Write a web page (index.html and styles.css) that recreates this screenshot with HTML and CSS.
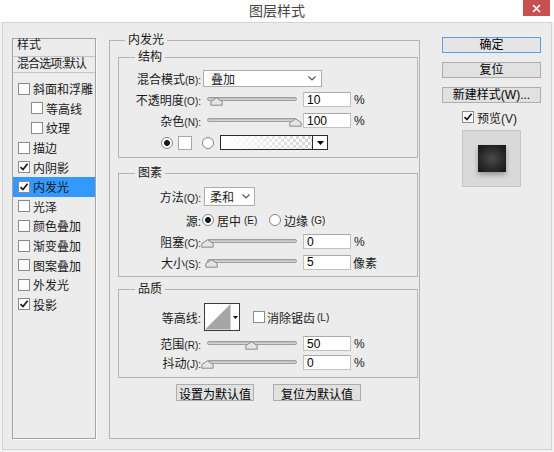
FILE: index.html
```html
<!DOCTYPE html>
<html lang="zh-CN">
<head>
  <meta charset="UTF-8" />
  <title>图层样式</title>
  <link rel="stylesheet" href="styles.css">
</head>
<body>

<header class="titlebar">
  <span></span>
  <h1 class="title">图层样式</h1>
  <button class="close" aria-label="关闭">
    <svg width="9" height="9" viewBox="0 0 9 9"><path d="M1 1L8 8M8 1L1 8" stroke="#fff" stroke-width="1.6"/></svg>
  </button>
</header>

<div class="dialog">
  <aside class="styles">
    <div class="styles-head">样式</div>
    <div class="styles-head blend">混合选项:默认</div>
    <ul class="style-list">
      <li><span class="cb"></span>斜面和浮雕</li>
      <li class="sub"><span class="cb"></span>等高线</li>
      <li class="sub"><span class="cb"></span>纹理</li>
      <li><span class="cb"></span>描边</li>
      <li><span class="cb"><svg width="10" height="10" viewBox="0 0 10 10"><path d="M1.5 5.2L4 7.6L8.6 1.8" fill="none" stroke="#1a1a1a" stroke-width="1.7"/></svg></span>内阴影</li>
      <li class="active"><span class="cb"><svg width="10" height="10" viewBox="0 0 10 10"><path d="M1.5 5.2L4 7.6L8.6 1.8" fill="none" stroke="#1a1a1a" stroke-width="1.7"/></svg></span>内发光</li>
      <li><span class="cb"></span>光泽</li>
      <li><span class="cb"></span>颜色叠加</li>
      <li><span class="cb"></span>渐变叠加</li>
      <li><span class="cb"></span>图案叠加</li>
      <li><span class="cb"></span>外发光</li>
      <li><span class="cb"><svg width="10" height="10" viewBox="0 0 10 10"><path d="M1.5 5.2L4 7.6L8.6 1.8" fill="none" stroke="#1a1a1a" stroke-width="1.7"/></svg></span>投影</li>
    </ul>
  </aside>

  <fieldset class="group outer">
    <legend>内发光</legend>

    <fieldset class="group inner structure">
      <legend>结构</legend>
      <div class="row">
        <span class="label">混合模式<span class="k">(B):</span></span>
        <div class="select blend-mode"><span>叠加</span><svg width="8" height="5" viewBox="0 0 8 5"><path d="M.5 .5L4 4L7.5 .5" fill="none" stroke="#555" stroke-width="1.2"/></svg></div>
      </div>
      <div class="row">
        <span class="label">不透明度<span class="k">(O):</span></span>
        <div class="slider" style="--v:10"><svg class="thumb" width="13" height="9" viewBox="0 0 13 9"><path d="M6.5 .8L12.2 4.6V8.2H.8V4.6Z" fill="#e4e4e4" stroke="#8a8a8a"/></svg></div>
        <input class="num" type="text" value="10"><span class="unit">%</span>
      </div>
      <div class="row">
        <span class="label">杂色<span class="k">(N):</span></span>
        <div class="slider" style="--v:100"><svg class="thumb" width="13" height="9" viewBox="0 0 13 9"><path d="M6.5 .8L12.2 4.6V8.2H.8V4.6Z" fill="#e4e4e4" stroke="#8a8a8a"/></svg></div>
        <input class="num" type="text" value="100"><span class="unit">%</span>
      </div>
      <div class="row color-row">
        <span class="radio on"></span>
        <span class="color-swatch"></span>
        <span class="radio second"></span>
        <span class="gradient">
          <span class="gradient-fill"></span>
          <span class="gradient-drop"><svg width="7" height="4" viewBox="0 0 7 4"><path d="M0 0H7L3.5 4Z" fill="#000"/></svg></span>
        </span>
      </div>
    </fieldset>

    <fieldset class="group inner elements">
      <legend>图素</legend>
      <div class="row">
        <span class="label">方法<span class="k">(Q):</span></span>
        <div class="select method"><span>柔和</span><svg width="8" height="5" viewBox="0 0 8 5"><path d="M.5 .5L4 4L7.5 .5" fill="none" stroke="#555" stroke-width="1.2"/></svg></div>
      </div>
      <div class="row">
        <span class="label">源:</span>
        <label class="opt first"><span class="radio on"></span>居中<span class="k">(E)</span></label>
        <label class="opt"><span class="radio"></span>边缘<span class="k">(G)</span></label>
      </div>
      <div class="row">
        <span class="label">阻塞<span class="k">(C):</span></span>
        <div class="slider" style="--v:0"><svg class="thumb" width="13" height="9" viewBox="0 0 13 9"><path d="M6.5 .8L12.2 4.6V8.2H.8V4.6Z" fill="#e4e4e4" stroke="#8a8a8a"/></svg></div>
        <input class="num" type="text" value="0"><span class="unit">%</span>
      </div>
      <div class="row">
        <span class="label">大小<span class="k">(S):</span></span>
        <div class="slider" style="--v:5"><svg class="thumb" width="13" height="9" viewBox="0 0 13 9"><path d="M6.5 .8L12.2 4.6V8.2H.8V4.6Z" fill="#e4e4e4" stroke="#8a8a8a"/></svg></div>
        <input class="num" type="text" value="5"><span class="unit px">像素</span>
      </div>
    </fieldset>

    <fieldset class="group inner quality">
      <legend>品质</legend>
      <div class="row">
        <span class="label">等高线:</span>
        <div class="contour">
          <svg class="curve" width="26" height="26" viewBox="0 0 26 26"><path d="M0 26L26 0V26Z" fill="#a6a6a6"/></svg>
          <span class="contour-drop"><svg width="5" height="3" viewBox="0 0 5 3"><path d="M0 0H5L2.5 3Z" fill="#000"/></svg></span>
        </div>
        <label class="opt aa"><span class="cb"></span>消除锯齿<span class="k">(L)</span></label>
      </div>
      <div class="row">
        <span class="label">范围<span class="k">(R):</span></span>
        <div class="slider" style="--v:50"><svg class="thumb" width="13" height="9" viewBox="0 0 13 9"><path d="M6.5 .8L12.2 4.6V8.2H.8V4.6Z" fill="#e4e4e4" stroke="#8a8a8a"/></svg></div>
        <input class="num" type="text" value="50"><span class="unit">%</span>
      </div>
      <div class="row">
        <span class="label">抖动<span class="k">(J):</span></span>
        <div class="slider" style="--v:0"><svg class="thumb" width="13" height="9" viewBox="0 0 13 9"><path d="M6.5 .8L12.2 4.6V8.2H.8V4.6Z" fill="#e4e4e4" stroke="#8a8a8a"/></svg></div>
        <input class="num" type="text" value="0"><span class="unit">%</span>
      </div>
    </fieldset>

    <div class="defaults">
      <button class="btn">设置为默认值</button>
      <button class="btn wide">复位为默认值</button>
    </div>
  </fieldset>

  <div class="actions">
    <button class="btn primary">确定</button>
    <button class="btn">复位</button>
    <button class="btn">新建样式(W)...</button>
    <label class="preview-check"><span class="cb"><svg width="10" height="10" viewBox="0 0 10 10"><path d="M1.5 5.2L4 7.6L8.6 1.8" fill="none" stroke="#1a1a1a" stroke-width="1.7"/></svg></span>预览(V)</label>
    <div class="preview"><div class="preview-swatch"></div></div>
  </div>
</div>

</body>
</html>
```

FILE: styles.css
```css
* {
  box-sizing: border-box;
}

html {
  background: #f3f3f3;
}

body {
  margin: 0;
  width: 554px;
  height: 452px;
  overflow: hidden;
  font-family: "Liberation Sans", "Noto Sans CJK SC", sans-serif;
  font-size: 12px;
  color: #1a1a1a;
}

/* title bar */
.titlebar {
  height: 22px;
  background: #fff;
  display: grid;
  grid-template-columns: 1fr auto 1fr;
  align-items: start;
}

.title {
  margin: 0;
  font-size: 14px;
  font-weight: normal;
  line-height: 22px;
  color: #444;
}

.close {
  justify-self: end;
  margin-right: 4px;
  width: 27px;
  height: 16px;
  padding: 0;
  border: 0;
  background: #c75050;
  display: flex;
  align-items: center;
  justify-content: center;
}

/* dialog body */
.dialog {
  margin-left: 2px;
  width: 550px;
  height: 428px;
  background: #ececec;
  border: 1px solid #d2d2d2;
  display: flex;
  align-items: flex-start;
  padding: 9px 0 0 9px;
}

/* left list of effects */
.styles {
  flex: none;
  width: 84px;
  height: 401px;
  margin-top: 6px;
  border: 1px solid #a3a3a3;
  box-shadow: 1px 1px 0 #fafafa;
}

.styles-head {
  height: 18px;
  line-height: 13px;
  padding-left: 4px;
  border-bottom: 1px solid #c4c4c4;
  white-space: nowrap;
}

.styles-head.blend {
  height: 16px;
  line-height: 15px;
  letter-spacing: -0.9px;
}

.style-list {
  list-style: none;
  margin: 0;
  padding: 6px 0 0;
}

.style-list li {
  height: 19.6px;
  display: flex;
  align-items: center;
  gap: 3px;
  padding-left: 5px;
}

.style-list .sub {
  padding-left: 18px;
}

.style-list .active {
  background: #3399ff;
}

.cb {
  flex: none;
  width: 12px;
  height: 12px;
  border: 1px solid #8c8c8c;
  background: #fff;
  display: inline-flex;
  align-items: center;
  justify-content: center;
}

.cb svg {
  display: block;
}

.radio {
  flex: none;
  width: 12px;
  height: 12px;
  border-radius: 50%;
  border: 1px solid #858585;
  background: #fff;
}

.radio.on {
  background: radial-gradient(circle, #1a1a1a 0 2.6px, #fff 3.3px);
}

/* group boxes */
.group {
  margin: 0;
  padding: 0;
  min-width: 0;
  border: 1px solid #b3b3b3;
}

.group legend {
  padding: 0 3px;
  font-size: 12px;
  line-height: 16px;
}

.outer {
  flex: none;
  width: 311px;
  height: 407px;
  margin-left: 13px;
  padding: 0 1px 0 8px;
}

.outer > legend {
  margin-left: 7px;
}

.inner {
  display: grid;
}

.inner > legend {
  margin-left: 16px;
}

.structure {
  margin-top: 1px;
  padding: 2px 0 3px;
  grid-template-rows: 22px 21px 21px 23px;
}

.elements {
  margin-top: 7px;
  padding: 3px 0 4px;
  grid-template-rows: 25px 22px 21px 20px;
}

.quality {
  margin-top: 4px;
  padding: 3px 0 5px;
  grid-template-rows: 34px 19px 19px;
}

.row {
  display: flex;
  align-items: center;
  white-space: nowrap;
}

.label {
  flex: none;
  width: 82px;
  text-align: right;
}

.k {
  font-size: 10px;
}

/* controls */
.select {
  flex: none;
  display: flex;
  align-items: center;
  justify-content: space-between;
  background: #fff;
  border: 1px solid #acacac;
}

.blend-mode {
  width: 119px;
  height: 17px;
  margin-left: 2px;
  padding: 0 5px 0 7px;
}

.method {
  width: 51px;
  height: 19px;
  margin-left: 3px;
  padding: 0 4px 0 5px;
}

.slider {
  flex: none;
  position: relative;
  width: 90px;
  height: 4px;
  margin: 0 0 2px 6px;
  border: 1px solid #9e9e9e;
  border-radius: 2px;
  background: linear-gradient(#b6b6b6, #dedede);
}

.thumb {
  position: absolute;
  top: -1px;
  left: calc(var(--v) * 0.875px - 7px);
}

.num {
  flex: none;
  width: 48px;
  height: 15px;
  margin: 0 0 0 6px;
  padding: 0 3px;
  border: 1px solid #c2c2c2;
  border-top-color: #a9a9a9;
  background: #fff;
  font: 12px "Liberation Sans", sans-serif;
  color: #000;
}

.unit {
  margin-left: 3px;
}

.unit.px {
  margin-left: 2px;
}

.color-row {
  padding-left: 42px;
}

.color-swatch {
  flex: none;
  width: 14px;
  height: 14px;
  margin-left: 5px;
  border: 1px solid #a6a6a6;
  background: #fff;
}

.radio.second {
  margin-left: 10px;
}

.gradient {
  flex: none;
  display: flex;
  width: 108px;
  height: 15px;
  margin-left: 6px;
  border: 1px solid #2b2b2b;
}

.gradient-fill {
  flex: 1;
  background:
    linear-gradient(to right, #fff 5%, rgba(255, 255, 255, 0) 92%),
    repeating-conic-gradient(#d6d6d6 0 25%, #fff 0 50%) 0 0 / 6px 6px;
}

.gradient-drop {
  width: 15px;
  border-left: 1px solid #2b2b2b;
  background: #fff;
  display: flex;
  align-items: center;
  justify-content: center;
}

.opt {
  display: flex;
  align-items: center;
  gap: 3px;
}

.opt.first {
  width: 67px;
  margin-left: 1px;
}

.contour {
  flex: none;
  display: flex;
  width: 36px;
  height: 28px;
  margin-left: 3px;
  border: 1px solid #3a3a3a;
  background: #fff;
}

.curve {
  display: block;
  border-right: 1px solid #d0d0d0;
}

.contour-drop {
  flex: 1;
  display: flex;
  align-items: center;
  justify-content: center;
}

.opt.aa {
  margin-left: 13px;
  gap: 2px;
}

/* buttons */
.btn {
  height: 17px;
  padding: 0;
  border: 1px solid #adadad;
  background: #e1e1e1;
  font: 12px "Liberation Sans", "Noto Sans CJK SC", sans-serif;
  color: #000;
}

.defaults {
  display: flex;
  gap: 19px;
  margin-top: 6px;
  padding-left: 58px;
}

.defaults .btn {
  width: 78px;
}

.defaults .btn.wide {
  width: 88px;
}

.actions {
  flex: none;
  width: 99px;
  margin: 5px 0 0 22px;
  display: flex;
  flex-direction: column;
}

.actions .btn {
  height: 16px;
  line-height: 14px;
}

.actions .btn + .btn {
  margin-top: 9px;
}

.btn.primary {
  border-color: #5a9fe5;
  background: #e5e5e5;
}

.preview-check {
  display: flex;
  align-items: center;
  gap: 3px;
  height: 14px;
  margin: 7px 0 0 20px;
}

.preview {
  width: 59px;
  height: 57px;
  margin: 6px 0 0 20px;
  background: #d9d9d9;
  border: 1px solid #c6c6c6;
  display: flex;
  align-items: center;
  justify-content: center;
}

.preview-swatch {
  width: 28px;
  height: 27px;
  background: radial-gradient(farthest-corner, #4a4a4a, #2b2b2b 55%, #151515);
  box-shadow: 0 3px 5px rgba(0, 0, 0, 0.3);
}
```
